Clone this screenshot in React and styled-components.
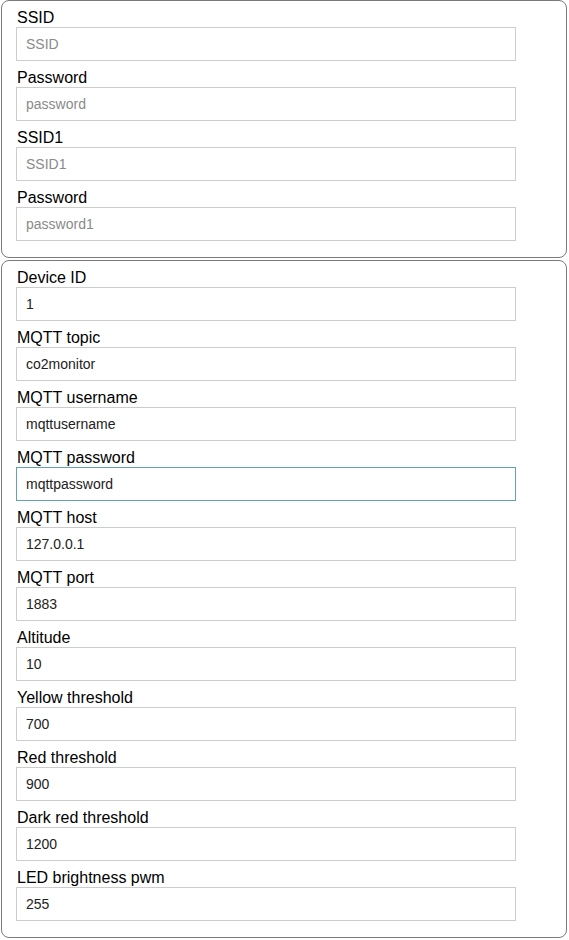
import React, { useEffect, useRef } from "react"
import styled, { createGlobalStyle } from "styled-components"

const GlobalStyle = createGlobalStyle`
  body {
    margin: 0;
    background: #fff;
    font-family: "Liberation Sans", Arial, sans-serif;
    color: #000;
  }
`

const wifiFields = [
  { label: "SSID", placeholder: "SSID" },
  { label: "Password", placeholder: "password" },
  { label: "SSID1", placeholder: "SSID1" },
  { label: "Password", placeholder: "password1" },
]

const deviceFields = [
  { label: "Device ID", value: "1" },
  { label: "MQTT topic", value: "co2monitor" },
  { label: "MQTT username", value: "mqttusername" },
  { label: "MQTT password", value: "mqttpassword", focused: true },
  { label: "MQTT host", value: "127.0.0.1" },
  { label: "MQTT port", value: "1883" },
  { label: "Altitude", value: "10" },
  { label: "Yellow threshold", value: "700" },
  { label: "Red threshold", value: "900" },
  { label: "Dark red threshold", value: "1200" },
  { label: "LED brightness pwm", value: "255" },
]

const Field = ({ label, placeholder, value, focused }) => {
  const ref = useRef(null)

  useEffect(() => {
    if (focused && ref.current) {
      ref.current.focus()
      const len = ref.current.value.length
      ref.current.setSelectionRange(len, len)
    }
  }, [focused])

  return (
    <Group>
      <Label>{label}</Label>
      <Input
        ref={ref}
        type="text"
        placeholder={placeholder}
        defaultValue={value}
        $focused={focused}
      />
    </Group>
  )
}

const App = () => {
  return (
    <>
      <GlobalStyle />
      <Page>
        <Card>
          {wifiFields.map((f, i) => (
            <Field key={i} {...f} />
          ))}
        </Card>
        <Card>
          {deviceFields.map((f, i) => (
            <Field key={i} {...f} />
          ))}
        </Card>
      </Page>
    </>
  )
}

export default App

const Page = styled.div`
  display: flex;
  flex-direction: column;
  gap: 2px;
  padding: 0 2px 0 1px;
  width: 566px;
`

const Card = styled.div`
  border: 1px solid #7a7a7a;
  border-radius: 8px;
  padding: 0 0 16px 14px;
`

const Group = styled.div`
  display: flex;
  flex-direction: column;
`

const Label = styled.label`
  display: block;
  font-size: 16px;
  line-height: 18px;
  padding: 8px 0 0 1px;
  color: #000;
`

const Input = styled.input`
  box-sizing: border-box;
  width: 500px;
  height: 34px;
  margin: 0;
  padding: 0 9px;
  border: 1px solid ${p => (p.$focused ? "#62a3b3" : "#cccccc")};
  border-radius: 0;
  font-family: "Liberation Sans", Arial, sans-serif;
  font-size: 14px;
  color: #222;
  background: #fff;
  outline: none;

  &::placeholder {
    color: #8a8a8a;
  }
`
